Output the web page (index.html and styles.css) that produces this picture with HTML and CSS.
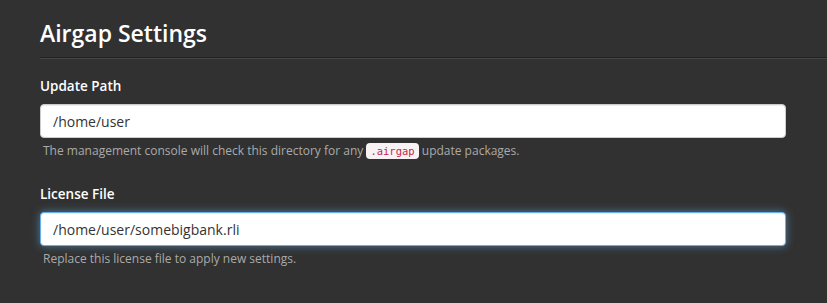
FILE: index.html
```html
<!DOCTYPE html>
<html lang="en">
<head>
    <meta charset="UTF-8">
    <meta name="viewport" content="width=device-width, initial-scale=1.0">
    <title>Airgap Settings</title>
    <link rel="stylesheet" href="styles.css">
</head>
<body>
    <div class="page-header">
        <h1>Airgap Settings</h1>
    </div>

    <form class="settings-form">
        <div class="form-group">
            <label for="updatePath">Update Path</label>
            <input type="text" id="updatePath" class="form-control" value="/home/user">
            <p class="help-block">The management console will check this directory for any <code>.airgap</code> update packages.</p>
        </div>
        <div class="form-group">
            <label for="licenseFile">License File</label>
            <input type="text" id="licenseFile" class="form-control focused" value="/home/user/somebigbank.rli">
            <p class="help-block">Replace this license file to apply new settings.</p>
        </div>
    </form>
</body>
</html>
```

FILE: styles.css
```css
body {
    font-family: 'Open Sans', 'Liberation Sans', sans-serif;
    background-color: #313131;
    color: #fff;
    margin: 0;
    padding: 0;
}
.page-header {
    margin-left: 40px;
    padding: 19px 0 9px;
    border-bottom: 1px solid #222;
    box-shadow: 0 1px 0 #454545;
}
h1 {
    margin: 0;
    font-size: 23px;
    line-height: 29px;
    font-weight: 600;
    color: #fff;
}
.settings-form {
    padding: 18px 41px 0 40px;
}
.form-group {
    margin-bottom: 24px;
}
label {
    display: block;
    font-size: 13.5px;
    line-height: 20px;
    font-weight: 600;
    color: #fff;
    margin-bottom: 8px;
}
.form-control {
    display: block;
    box-sizing: border-box;
    width: 100%;
    height: 34px;
    padding: 6px 12px;
    font-family: inherit;
    font-size: 14px;
    color: #333;
    background-color: #fff;
    border: 1px solid #ccc;
    border-radius: 4px;
    box-shadow: inset 0 1px 1px rgba(0, 0, 0, 0.075);
    outline: none;
}
.form-control.focused {
    border-color: #66afe9;
    box-shadow: inset 0 1px 1px rgba(0, 0, 0, 0.075), 0 0 8px rgba(102, 175, 233, 0.6);
}
.help-block {
    margin: 4px 0 10px 3px;
    font-size: 12px;
    line-height: 17px;
    color: #aaa;
}
code {
    font-family: 'DejaVu Sans Mono', 'Liberation Mono', monospace;
    font-size: 10.5px;
    padding: 2px 4px;
    color: #c7254e;
    background-color: #f9f2f4;
    border-radius: 4px;
}
```
